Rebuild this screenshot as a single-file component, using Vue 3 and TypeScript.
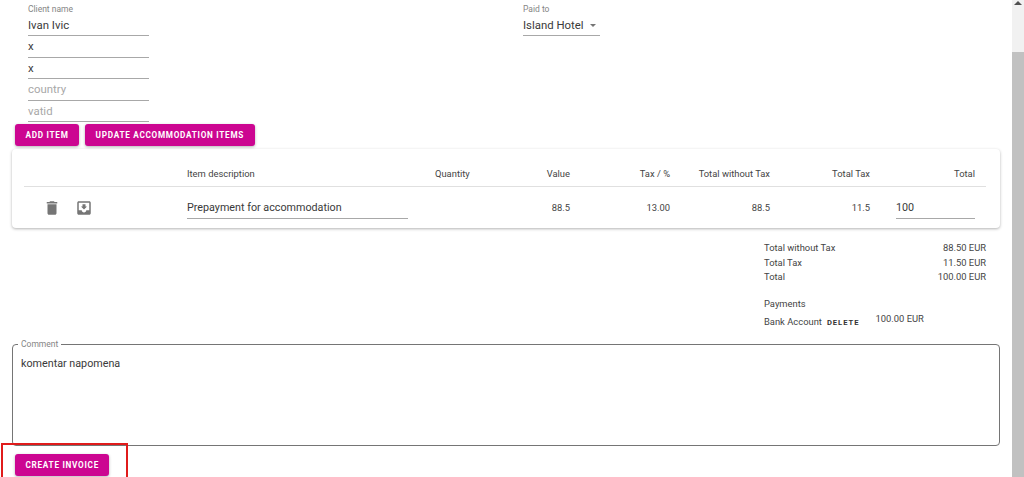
<script setup lang="ts">
const headers = ['Quantity', 'Value', 'Tax / %', 'Total without Tax', 'Total Tax', 'Total']
const addressFields = [
  { value: 'x', placeholder: false },
  { value: 'x', placeholder: false },
  { value: 'country', placeholder: true },
  { value: 'vatid', placeholder: true },
]
const totals = [
  ['Total without Tax', '88.50 EUR'],
  ['Total Tax', '11.50 EUR'],
  ['Total', '100.00 EUR'],
]
</script>

<template>
  <div class="page">
    <main class="content">
      <section class="top">
        <div class="client">
          <div class="field field-first">
            <span class="label">Client name</span>
            <span class="value">Ivan Ivic</span>
          </div>
          <div v-for="(f, i) in addressFields" :key="i" class="field">
            <span class="value" :class="{ placeholder: f.placeholder }">{{ f.value }}</span>
          </div>
        </div>
        <div class="paid field field-first">
          <span class="label">Paid to</span>
          <span class="value select">Island Hotel<i class="caret"></i></span>
        </div>
      </section>

      <div class="actions">
        <button class="btn">ADD ITEM</button>
        <button class="btn">UPDATE ACCOMMODATION ITEMS</button>
      </div>

      <section class="card">
        <div class="grid head">
          <span></span>
          <span>Item description</span>
          <span>{{ headers[0] }}</span>
          <span class="r">{{ headers[1] }}</span>
          <span class="r">{{ headers[2] }}</span>
          <span class="r">{{ headers[3] }}</span>
          <span class="r">{{ headers[4] }}</span>
          <span class="r total-head">{{ headers[5] }}</span>
        </div>
        <div class="grid row">
          <div class="icons">
            <svg viewBox="0 0 24 24" width="18" height="18"><path fill="#757575" d="M6 19c0 1.1.9 2 2 2h8c1.1 0 2-.9 2-2V7H6v12zM19 4h-3.5l-1-1h-5l-1 1H5v2h14V4z" /></svg>
            <svg viewBox="0 0 24 24" width="18" height="18"><path fill="#757575" d="M19 3H4.99c-1.11 0-1.98.9-1.98 2L3 19c0 1.1.88 2 1.99 2H19c1.1 0 2-.9 2-2V5c0-1.1-.9-2-2-2zm0 12h-4c0 1.66-1.35 3-3 3s-3-1.34-3-3H4.99V5H19v10zm-3-5h-2V7h-4v3H8l4 4 4-4z" /></svg>
          </div>
          <span class="cell-input desc">Prepayment for accommodation</span>
          <span></span>
          <span class="r">88.5</span>
          <span class="r">13.00</span>
          <span class="r">88.5</span>
          <span class="r">11.5</span>
          <span class="cell-input total-input">100</span>
        </div>
      </section>

      <section class="summary">
        <div v-for="t in totals" :key="t[0]" class="sum-row">
          <span>{{ t[0] }}</span><span>{{ t[1] }}</span>
        </div>
        <div class="payments">Payments</div>
        <div class="payment">
          <span>Bank Account</span>
          <span class="del">DELETE</span>
          <span class="amount">100.00 EUR</span>
        </div>
      </section>

      <fieldset class="comment">
        <legend>Comment</legend>
        <div class="comment-text">komentar napomena</div>
      </fieldset>

      <div class="create-row">
        <button class="btn">CREATE INVOICE</button>
      </div>
    </main>

    <aside class="scrollbar">
      <i class="arrow"></i>
      <div class="thumb"></div>
    </aside>

    <div class="highlight"></div>
  </div>
</template>

<style>
html, body { margin: 0; background: #fff; overflow: hidden; }
</style>

<style scoped>
.page {
  position: relative;
  display: flex;
  width: 1024px;
  height: 477px;
  overflow: hidden;
  background: #fff;
  color: #333;
  font-family: Roboto, "Liberation Sans", sans-serif;
}
.content {
  width: 1012px;
  box-sizing: border-box;
  padding: 0 12px;
  flex: none;
}
.top {
  display: flex;
  padding-left: 16px;
  height: 124px;
}
.client { width: 121px; margin-right: 374px; }
.field {
  display: flex;
  flex-direction: column;
  justify-content: flex-end;
  height: 21.5px;
  box-sizing: border-box;
  border-bottom: 1px solid #a8a8a8;
  padding-bottom: 3.5px;
}
.field-first { height: 36px; }
.paid { width: 77px; }
.label {
  font-size: 8.5px;
  line-height: 10px;
  color: #858585;
  margin-bottom: 5px;
}
.value {
  font-size: 11.4px;
  line-height: 13px;
  color: #3a3a3a;
}
.placeholder { color: #a8a8a8; }
.select { display: flex; align-items: center; }
.caret {
  margin-left: 6px;
  margin-top: 1px;
  border-left: 3.5px solid transparent;
  border-right: 3.5px solid transparent;
  border-top: 3.5px solid #757575;
}
.actions {
  display: flex;
  gap: 6px;
  padding-left: 3px;
  height: 25px;
}
.btn {
  height: 22px;
  padding: 0 10.5px;
  border: 0;
  border-radius: 3px;
  background: #cc0691;
  color: #fff;
  font-family: inherit;
  font-size: 8.2px;
  font-weight: 700;
  letter-spacing: 0.72px;
  white-space: nowrap;
  box-shadow: 0 1px 3px rgba(0, 0, 0, 0.3);
}
.card {
  height: 79px;
  box-sizing: border-box;
  padding: 0 14px 0 12px;
  border-radius: 4px;
  box-shadow: 0 1px 3px rgba(0, 0, 0, 0.3);
  background: #fff;
}
.grid {
  display: grid;
  grid-template-columns: 163px 248px 35px 100px 100px 100px 100px 116px;
  font-size: 9.4px;
  color: #444;
}
.head {
  height: 38px;
  align-items: end;
  padding-bottom: 6px;
  box-sizing: border-box;
  line-height: 12px;
  border-bottom: 1px solid #e0e0e0;
}
.head > span { white-space: nowrap; }
.row {
  height: 41px;
  align-items: center;
}
.r { text-align: right; }
.total-head { padding-right: 11px; }
.icons {
  display: flex;
  align-items: center;
  gap: 14px;
  padding-left: 19px;
}
.cell-input {
  display: block;
  box-sizing: border-box;
  height: 21px;
  padding-top: 3px;
  margin-top: 1px;
  font-size: 10.75px;
  line-height: 13px;
  color: #3a3a3a;
  border-bottom: 1px solid #a8a8a8;
}
.desc { width: 221px; }
.total-input { width: 79px; margin-left: 26px; }
.summary {
  margin-left: 752px;
  width: 222px;
  padding-top: 13px;
  height: 111px;
  box-sizing: border-box;
  font-size: 9.4px;
  line-height: 14.5px;
  color: #444;
}
.sum-row { display: flex; justify-content: space-between; }
.payments { margin-top: 12px; }
.payment {
  display: flex;
  align-items: flex-end;
  margin-top: 4px;
}
.del {
  margin-left: 5px;
  font-size: 7.6px;
  font-weight: 700;
  letter-spacing: 1px;
  color: #333;
  position: relative;
  top: 1px;
}
.amount {
  margin-left: 16px;
  position: relative;
  top: -3px;
}
.comment {
  display: block;
  height: 107px;
  margin: 0;
  padding: 0 8px;
  box-sizing: border-box;
  border: 1px solid #757575;
  border-radius: 4px;
  min-width: 0;
}
.comment legend {
  padding: 0 3px;
  margin-left: -3px;
  font-size: 8.5px;
  line-height: 10px;
  color: #858585;
}
.comment-text {
  margin-top: 8px;
  font-size: 10.75px;
  line-height: 14px;
  color: #3a3a3a;
}
.create-row { padding: 7px 0 0 3px; }
.scrollbar {
  position: relative;
  width: 12px;
  flex: none;
  background: #f1f1f1;
}
.arrow {
  position: absolute;
  top: 1px;
  left: 2px;
  border-left: 4px solid transparent;
  border-right: 4px solid transparent;
  border-bottom: 4px solid #505050;
}
.thumb {
  position: absolute;
  top: 52px;
  left: 0;
  right: 0;
  bottom: 0;
  background: #c1c1c1;
}
.highlight {
  position: absolute;
  left: 1px;
  top: 443px;
  width: 127px;
  height: 36px;
  box-sizing: border-box;
  border: 2px solid #e01b1b;
}
</style>
